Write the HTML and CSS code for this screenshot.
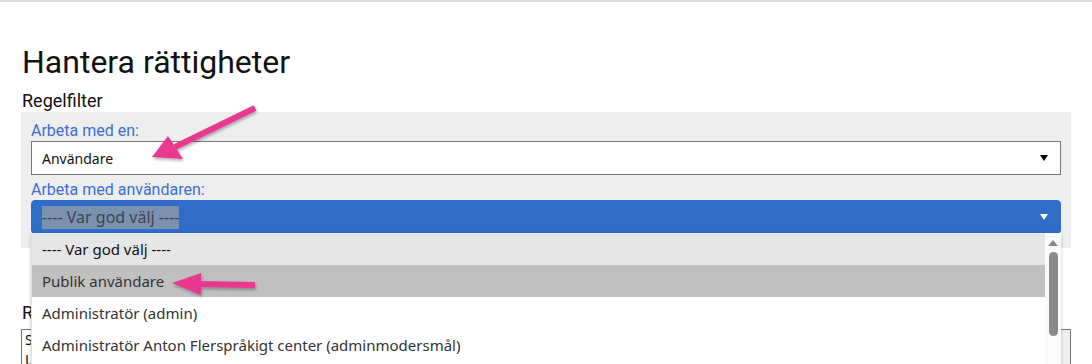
FILE: index.html
```html
<!DOCTYPE html>
<html lang="sv">
<head>
<meta charset="utf-8">
<link rel="stylesheet" href="styles.css">
</head>
<body>
<div class="topbar"></div>
<main class="page">
  <h1 class="title">Hantera rättigheter</h1>
  <div class="section-label">Regelfilter</div>
  <div class="panel">
    <div class="field-label">Arbeta med en:</div>
    <div class="select white">
      <span class="select-text">Användare</span>
      <span class="caret dark"></span>
    </div>
    <div class="field-label">Arbeta med användaren:</div>
    <div class="select blue">
      <span class="select-text hl">---- Var god välj ----</span>
      <span class="caret light"></span>
    </div>
  </div>
  <div class="below">
    <div class="section-label">Regler</div>
    <div class="listbox">
      <div class="lb-item">Sök</div>
      <div class="lb-item">Lista</div>
      <div class="lb-scroll"></div>
    </div>
  </div>

  <div class="dropdown">
    <div class="dd-items">
      <div class="dd-item first">---- Var god välj ----</div>
      <div class="dd-item hover">Publik användare</div>
      <div class="dd-item">Administratör (admin)</div>
      <div class="dd-item">Administratör Anton Flerspråkigt center (adminmodersmål)</div>
    </div>
    <div class="dd-scroll">
      <div class="sb-up"></div>
      <div class="sb-thumb"></div>
    </div>
  </div>

  <svg class="arrow arrow1" width="120" height="70" viewBox="0 0 120 70">
    <defs>
      <filter id="sh" x="-20%" y="-20%" width="140%" height="140%">
        <feDropShadow dx="1" dy="2" stdDeviation="1.5" flood-color="#000" flood-opacity="0.3"/>
      </filter>
    </defs>
    <g filter="url(#sh)">
      <line x1="110" y1="7" x2="30" y2="46" stroke="#e8388f" stroke-width="6" stroke-linecap="butt"/>
      <polygon points="7,56 23,35 38,58" fill="#e8388f"/>
    </g>
  </svg>
  <svg class="arrow arrow2" width="100" height="30" viewBox="0 0 100 30">
    <g filter="url(#sh)">
      <line x1="88" y1="14" x2="30" y2="13" stroke="#e8388f" stroke-width="6"/>
      <polygon points="5,12 34,2 34,24" fill="#e8388f"/>
    </g>
  </svg>
</main>
</body>
</html>
```
FILE: styles.css
```css
html, body {
  margin: 0;
  padding: 0;
  background: #fff;
  width: 1092px;
  height: 364px;
  overflow: hidden;
}
body {
  font-family: Roboto, "Liberation Sans", sans-serif;
  color: #111;
}
.topbar {
  height: 2px;
  background: #dcdcdc;
}
.page {
  position: relative;
  padding: 0 21px;
  width: 1050px;
}
.title {
  margin: 0;
  padding-top: 40px;
  font-size: 32px;
  font-weight: 400;
  line-height: 40px;
  padding-left: 1px;
  color: #111;
}
.section-label {
  font-size: 18px;
  line-height: 22px;
  margin-top: 8px;
  padding-left: 1px;
}
.panel {
  background: #eeeeee;
  padding: 8px 10px 14px 10px;
}
.field-label {
  color: #3b6fd4;
  font-size: 16px;
  line-height: 21px;
}
.select {
  height: 34px;
  box-sizing: border-box;
  display: flex;
  align-items: center;
  justify-content: space-between;
  padding: 0 12px 0 10px;
  font-family: "Noto Sans", "Open Sans", sans-serif;
  font-size: 14px;
  margin-bottom: 4px;
}
.select.white {
  background: #fff;
  border: 1px solid #777;
}
.select.blue {
  background: #2e6ec8;
  border-radius: 4px;
  border: 1px solid #2e6ec8;
  margin-bottom: 0;
  font-size: 16px;
}
.select-text {
  color: #111;
}
.select-text.hl {
  background: #7a91b0;
  color: #3e4450;
  line-height: 23px;
}
.caret {
  width: 0;
  height: 0;
  border-left: 4px solid transparent;
  border-right: 4px solid transparent;
  border-top: 6px solid #000;
}
.caret.light {
  border-top-color: #fff;
}
.below {
  margin-top: 54px;
}
.below .section-label {
  margin-top: 0;
}
.listbox {
  position: relative;
  border: 1px solid #777;
  height: 34px;
  margin-top: 5px;
  font-family: "Noto Sans", sans-serif;
  font-size: 14px;
  padding-left: 3px;
  overflow: hidden;
}
.lb-item {
  line-height: 20px;
}
.lb-scroll {
  position: absolute;
  right: 0;
  top: 0;
  width: 12px;
  height: 100%;
  background: #f0f0f0;
}
.dropdown {
  position: absolute;
  left: 31px;
  top: 231px;
  width: 1030px;
  height: 133px;
  display: flex;
  background: #fff;
  box-shadow: 0 2px 4px rgba(0,0,0,0.2);
  font-family: "Noto Sans", "Open Sans", sans-serif;
  font-size: 15px;
  color: #333;
}
.dd-items {
  flex: 1;
  border-left: 1px solid #e0e0e0;
  overflow: hidden;
}
.dd-item {
  height: 32px;
  line-height: 32px;
  padding-left: 10px;
  color: #333;
  white-space: nowrap;
}
.dd-item.first {
  background: #e6e6e6;
  color: #111;
}
.dd-item.hover {
  background: #c0c0c0;
}
.dd-scroll {
  width: 16px;
  background: #fafafa;
  position: relative;
}
.sb-up {
  width: 0;
  height: 0;
  margin: 7px auto 0;
  border-left: 5px solid transparent;
  border-right: 5px solid transparent;
  border-bottom: 6px solid #8a8a8a;
}
.sb-thumb {
  width: 9px;
  height: 84px;
  margin: 6px auto 0;
  background: #8a8a8a;
  border-radius: 5px;
}
.arrow {
  position: absolute;
  overflow: visible;
}
.arrow1 {
  left: 145px;
  top: 99px;
}
.arrow2 {
  left: 167px;
  top: 269px;
}
```
